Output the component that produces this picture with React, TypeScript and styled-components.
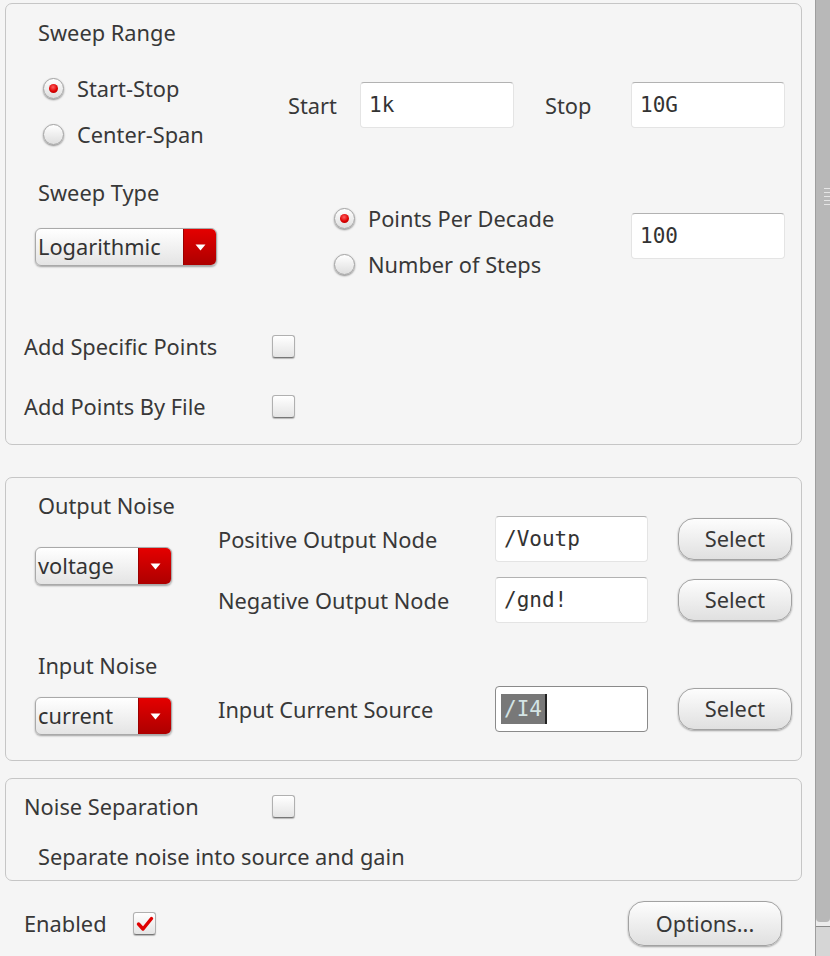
import React from 'react';
import styled, { createGlobalStyle, css } from 'styled-components';

const Global = createGlobalStyle`
  html, body { margin: 0; padding: 0; background: #f5f5f5; overflow: hidden; width: 830px; height: 956px; }
  body { font-family: "Noto Sans", "Open Sans", sans-serif; color: #3a3a3a; }
  #root { width: 830px; height: 956px; overflow: hidden; }
`;

const Window = styled.div`
  display: flex;
  width: 830px;
  height: 956px;
  background: #f5f5f5;
`;

const Content = styled.div`
  width: 815px;
  flex: none;
  display: flex;
  flex-direction: column;
  padding-top: 3px;
  box-sizing: border-box;
`;

const Group = styled.section<{ $h: number; $mt?: number }>`
  margin-left: 5px;
  margin-top: ${(p) => p.$mt ?? 0}px;
  width: 797px;
  height: ${(p) => p.$h}px;
  flex: none;
  box-sizing: border-box;
  border: 1px solid #c6c6c6;
  border-radius: 7px;
  display: flex;
  flex-direction: column;
`;

const Row = styled.div<{ $mt?: number; $pl?: number; $align?: string }>`
  display: flex;
  align-items: ${(p) => p.$align ?? 'flex-start'};
  margin-top: ${(p) => p.$mt ?? 0}px;
  padding-left: ${(p) => p.$pl ?? 0}px;
`;

const Column = styled.div<{ $w?: number; $mt?: number }>`
  display: flex;
  flex-direction: column;
  align-items: flex-start;
  flex: none;
  width: ${(p) => (p.$w ? `${p.$w}px` : 'auto')};
  margin-top: ${(p) => p.$mt ?? 0}px;
`;

const Label = styled.span<{ $w?: number; $ml?: number }>`
  display: inline-block;
  flex: none;
  font-size: 21.8px;
  line-height: 29px;
  white-space: nowrap;
  color: #383838;
  width: ${(p) => (p.$w ? `${p.$w}px` : 'auto')};
  margin-left: ${(p) => p.$ml ?? 0}px;
`;

const RadioItem = styled.label`
  display: flex;
  align-items: center;
  height: 46px;
  padding-left: 5px;
  gap: 13px;
`;

const RadioCircle = styled.span<{ $checked?: boolean }>`
  position: relative;
  width: 21px;
  height: 21px;
  flex: none;
  border-radius: 50%;
  box-sizing: border-box;
  border: 1px solid #a2a2a2;
  background: linear-gradient(#ffffff, #dedede);
  box-shadow: 0 1px 2px rgba(0, 0, 0, 0.45);
  ${(p) =>
    p.$checked &&
    css`
      &::after {
        content: '';
        position: absolute;
        left: 5px;
        top: 5px;
        width: 9px;
        height: 9px;
        border-radius: 50%;
        background: radial-gradient(circle at 45% 35%, #ff6060 0%, #dd0000 55%, #9c0000 100%);
      }
    `}
`;

const TextInput = styled.div<{ $w: number; $focus?: boolean }>`
  width: ${(p) => p.$w}px;
  height: 46px;
  flex: none;
  box-sizing: border-box;
  background: #ffffff;
  border: 1px solid #e4e4e4;
  border-top-color: #b2b2b2;
  border-radius: 4px;
  padding-left: 8px;
  display: flex;
  align-items: center;
  font-family: "DejaVu Sans Mono", "Liberation Mono", monospace;
  font-size: 21px;
  color: #333;
  ${(p) =>
    p.$focus &&
    css`
      border: 1px solid #8a8a8a;
      padding-left: 5px;
    `}
`;

const Selected = styled.span`
  background: #787878;
  color: #d4e4e4;
  line-height: 30px;
  padding: 0 3px;
`;

const Caret = styled.span`
  width: 2px;
  height: 30px;
  background: #222;
`;

const Dropdown = styled.div<{ $w: number }>`
  display: flex;
  width: ${(p) => p.$w}px;
  height: 38px;
  flex: none;
  margin-left: -3px;
  box-sizing: border-box;
  border: 1px solid #a9a9a9;
  border-radius: 6px;
  overflow: hidden;
  background: linear-gradient(#ffffff, #e4e4e4);
  box-shadow: 0 1px 2px rgba(0, 0, 0, 0.35);
`;

const DropText = styled.span`
  flex: 1;
  font-size: 21.8px;
  line-height: 35px;
  padding-left: 2px;
  color: #333;
  white-space: nowrap;
`;

const DropArrow = styled.span`
  width: 32px;
  flex: none;
  display: flex;
  align-items: center;
  justify-content: center;
  background: linear-gradient(#e40000, #ad0000);
  border-left: 1px solid #9a0000;
`;

const CheckBox = styled.span`
  width: 23px;
  height: 23px;
  flex: none;
  box-sizing: border-box;
  border: 1px solid #b0b0b0;
  border-bottom-color: #777;
  border-radius: 3px;
  background: linear-gradient(#ffffff, #e4e4e4);
  box-shadow: 0 1px 1px rgba(0, 0, 0, 0.25);
  display: flex;
  align-items: center;
  justify-content: center;
`;

const PillButton = styled.button<{ $w: number; $h: number }>`
  width: ${(p) => p.$w}px;
  height: ${(p) => p.$h}px;
  flex: none;
  box-sizing: border-box;
  border: 1px solid #a2a2a2;
  border-radius: 16px;
  background: linear-gradient(#fdfdfd, #e0e0e0);
  box-shadow: 0 1px 2px rgba(0, 0, 0, 0.35);
  font-family: "Noto Sans", "Open Sans", sans-serif;
  font-size: 21.8px;
  line-height: 1;
  color: #383838;
  padding: 0;
`;

const NodeRow = styled.div<{ $mt?: number }>`
  display: flex;
  align-items: center;
  height: 46px;
  margin-top: ${(p) => p.$mt ?? 0}px;
`;

const Gap = styled.span<{ $w: number }>`
  width: ${(p) => p.$w}px;
  flex: none;
`;

const BottomRow = styled.div`
  display: flex;
  align-items: center;
  height: 45px;
  margin-top: 20px;
  padding-left: 24px;
  padding-right: 33px;
`;

const Spacer = styled.div`
  flex: 1;
`;

const ScrollTrack = styled.div`
  width: 15px;
  height: 956px;
  flex: none;
  display: flex;
  flex-direction: column;
  background-color: #ececec;
  box-sizing: border-box;
  border-left: 1px solid #9e9e9e;
`;

const ScrollThumb = styled.div`
  height: 922px;
  width: 100%;
  flex: none;
  background-color: #b8b8b8;
  border-radius: 0 0 4px 4px;
  position: relative;
`;

const Grip = styled.div`
  position: absolute;
  top: 188px;
  right: 0;
  width: 6px;
  height: 17px;
  background: repeating-linear-gradient(#e6e6e6 0 1px, transparent 1px 4px);
`;

const ScrollArrow = styled.div`
  margin-top: 4px;
  flex: 1;
  border-top: 1px solid #8a8a8a;
  background-color: #d6d6d6;
`;

const Arrow = () => (
  <svg width="11" height="7" viewBox="0 0 11 7">
    <path d="M0.5 0.5 L10.5 0.5 L5.5 6.5 Z" fill="#ffffff" />
  </svg>
);

const Check = () => (
  <svg width="18" height="16" viewBox="0 0 18 16">
    <path d="M2.5 8 L7 13 L15.5 2.5" fill="none" stroke="#e00000" strokeWidth="3.4" strokeLinecap="round" strokeLinejoin="round" />
  </svg>
);

const Radio = ({ checked, children }: { checked?: boolean; children: React.ReactNode }) => (
  <RadioItem>
    <RadioCircle $checked={checked} />
    <Label>{children}</Label>
  </RadioItem>
);

const Select = ({ label, w }: { label: string; w: number }) => (
  <Dropdown $w={w}>
    <DropText>{label}</DropText>
    <DropArrow>
      <Arrow />
    </DropArrow>
  </Dropdown>
);

export default function App() {
  return (
    <Window>
      <Global />
      <Content>
        <Group $h={442}>
          <Row $mt={14} $pl={32}>
            <Column $w={250}>
              <Label>Sweep Range</Label>
              <Column $mt={18}>
                <Radio checked>Start-Stop</Radio>
                <Radio>Center-Span</Radio>
              </Column>
            </Column>
            <Row $mt={64} $align="center">
              <Label $w={72}>Start</Label>
              <TextInput $w={154}>1k</TextInput>
              <Label $w={86} $ml={31}>Stop</Label>
              <TextInput $w={154}>10G</TextInput>
            </Row>
          </Row>
          <Row $mt={21} $pl={32}>
            <Column $w={291}>
              <Label>Sweep Type</Label>
              <Column $mt={21}>
                <Select label="Logarithmic" w={182} />
              </Column>
            </Column>
            <Column $w={302} $mt={17}>
              <Radio checked>Points Per Decade</Radio>
              <Radio>Number of Steps</Radio>
            </Column>
            <Column $mt={35}>
              <TextInput $w={154}>100</TextInput>
            </Column>
          </Row>
          <Row $mt={45} $pl={18} $align="center">
            <Label $w={248}>Add Specific Points</Label>
            <CheckBox />
          </Row>
          <Row $mt={31} $pl={18} $align="center">
            <Label $w={248}>Add Points By File</Label>
            <CheckBox />
          </Row>
        </Group>

        <Group $h={284} $mt={32}>
          <Row $mt={13} $pl={32}>
            <Column $w={180}>
              <Label>Output Noise</Label>
              <Column $mt={27}>
                <Select label="voltage" w={137} />
              </Column>
            </Column>
            <Column $mt={25}>
              <NodeRow>
                <Label $w={277}>Positive Output Node</Label>
                <TextInput $w={153}>/Voutp</TextInput>
                <Gap $w={30} />
                <PillButton $w={114} $h={42}>Select</PillButton>
              </NodeRow>
              <NodeRow $mt={15}>
                <Label $w={277}>Negative Output Node</Label>
                <TextInput $w={153}>/gnd!</TextInput>
                <Gap $w={30} />
                <PillButton $w={114} $h={42}>Select</PillButton>
              </NodeRow>
            </Column>
          </Row>
          <Row $mt={28} $pl={32}>
            <Column $w={180}>
              <Label>Input Noise</Label>
              <Column $mt={17}>
                <Select label="current" w={137} />
              </Column>
            </Column>
            <Column $mt={35}>
              <NodeRow>
                <Label $w={277}>Input Current Source</Label>
                <TextInput $w={153} $focus>
                  <Selected>/I4</Selected>
                  <Caret />
                </TextInput>
                <Gap $w={30} />
                <PillButton $w={114} $h={42}>Select</PillButton>
              </NodeRow>
            </Column>
          </Row>
        </Group>

        <Group $h={103} $mt={17}>
          <Row $mt={13} $pl={18} $align="center">
            <Label $w={248}>Noise Separation</Label>
            <CheckBox />
          </Row>
          <Row $mt={21} $pl={32}>
            <Label>Separate noise into source and gain</Label>
          </Row>
        </Group>

        <BottomRow>
          <Label $w={109}>Enabled</Label>
          <CheckBox>
            <Check />
          </CheckBox>
          <Spacer />
          <PillButton $w={154} $h={45}>Options...</PillButton>
        </BottomRow>
      </Content>
      <ScrollTrack>
        <ScrollThumb>
          <Grip />
        </ScrollThumb>
        <ScrollArrow />
      </ScrollTrack>
    </Window>
  );
}
